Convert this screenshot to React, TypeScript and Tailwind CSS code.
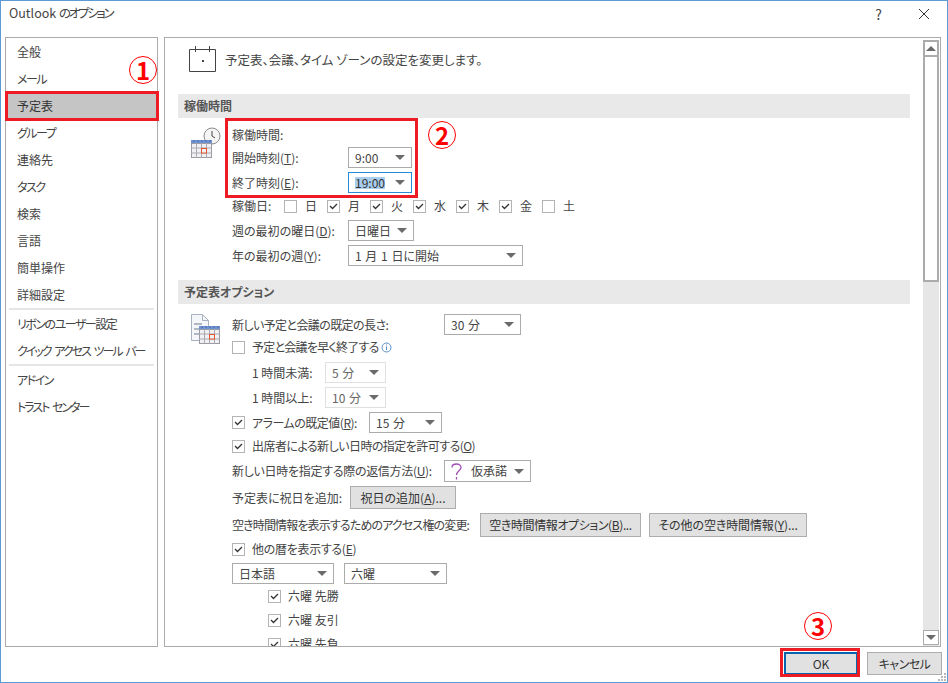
import type { ReactNode } from "react";

const FONT = "[font-family:'Noto_Sans_CJK_JP','Noto_Sans',sans-serif]";

function Arrow() {
  return <span className="h-0 w-0 flex-none border-x-[5px] border-t-[5px] border-x-transparent border-t-[#6b6b6b]" />;
}

function Combo({ value, width, active, muted, pre }: { value: string; width: string; active?: boolean; muted?: boolean; pre?: ReactNode }) {
  const border = active ? "border-[#2b8ad6]" : muted ? "border-[#e0e0e0]" : "border-[#ababab]";
  return (
    <div className={`flex h-full flex-none items-center justify-between border bg-white pl-[6px] pr-[6px] ${width} ${border}`}>
      <span className="flex items-center gap-[9px] whitespace-nowrap [word-spacing:1px]">
        {pre}
        <span className={active ? "bg-[#a9cdec] text-[#333]" : muted ? "text-[#666]" : ""}>{value}</span>
      </span>
      <Arrow />
    </div>
  );
}

function Check({ checked }: { checked?: boolean }) {
  return (
    <span className="flex h-[13px] w-[13px] flex-none items-center justify-center border border-[#b4b4b4] bg-white">
      {checked ? (
        <svg width="9" height="7" viewBox="0 0 9 7" fill="none" stroke="#333" strokeWidth="1.3">
          <path d="M1 3l2.5 2.5L8 1" />
        </svg>
      ) : null}
    </span>
  );
}

function Button({ children, width }: { children: ReactNode; width: string }) {
  return (
    <div className={`flex h-full flex-none items-center justify-center border border-[#adadad] bg-[#e1e1e1] whitespace-nowrap text-[#333] ${width}`}>
      {children}
    </div>
  );
}

function Row({ className, children }: { className: string; children: ReactNode }) {
  return <div className={`ml-[54px] flex items-center whitespace-nowrap ${className}`}>{children}</div>;
}

function Section({ title }: { title: string }) {
  return (
    <div className="flex h-[24px] w-[732px] flex-none items-center bg-[#e9e9e9] pl-[6px] font-bold text-[#555]">
      {title}
    </div>
  );
}

function Marker({ n, className }: { n: string; className: string }) {
  return (
    <div className={`absolute flex h-[28px] w-[28px] items-center justify-center rounded-full border border-[#ff0000] text-[24px] leading-none font-bold text-[#ff0000] ${className}`}>
      {n}
    </div>
  );
}

function Sidebar() {
  const first = ["全般", "メール", "予定表", "グループ", "連絡先", "タスク", "検索", "言語", "簡単操作", "詳細設定"];
  const second = ["リボンのユーザー設定", "クイック アクセス ツール バー"];
  const third = ["アドイン", "トラスト センター"];
  const kana = ["メール", "グループ", "タスク", "リボンのユーザー設定", "アドイン"];
  const spaced = ["クイック アクセス ツール バー", "トラスト センター"];
  const item = (label: string) => (
    <div
      key={label}
      className={`flex h-[27px] items-center pl-[11px] whitespace-nowrap ${label === "予定表" ? "bg-[#c5c5c5] text-[#333]" : ""} ${kana.includes(label) ? "tracking-[-1.5px]" : ""} ${spaced.includes(label) ? "tracking-[-2px] [word-spacing:3px]" : ""}`}
    >
      {label}
    </div>
  );
  return (
    <div className="h-full w-[153px] flex-none border border-[#ababab] bg-white">
      {first.map(item)}
      <div className="mx-[3px] h-[2px] bg-[#e6e6e6]" />
      {second.map(item)}
      <div className="mx-[3px] h-[2px] bg-[#e6e6e6]" />
      {third.map(item)}
    </div>
  );
}

function Scrollbar() {
  return (
    <div className="mt-[2px] mr-px flex w-[16px] flex-none flex-col bg-[#e6e6e6]">
      <div className="flex h-[15px] flex-none items-center justify-center border-2 border-b-0 border-[#ababab] bg-white">
        <span className="h-0 w-0 border-x-[5px] border-b-[5px] border-x-transparent border-b-[#6b6b6b]" />
      </div>
      <div className="h-[227px] flex-none border-2 border-[#ababab] bg-white" />
      <div className="flex-1" />
      <div className="mb-px flex h-[15px] flex-none items-center justify-center border border-[#ababab] bg-white">
        <span className="h-0 w-0 border-x-[5px] border-t-[5px] border-x-transparent border-t-[#6b6b6b]" />
      </div>
    </div>
  );
}

function CalendarGlyph() {
  return (
    <>
      <rect x="0.5" y="0.5" width="20" height="3" fill="#6f93d2" stroke="#6f93d2" />
      <path d="M3 0v2M7 0v2M11 0v2M15 0v2M19 0v2" stroke="#4a6aa8" />
      <rect x="0.5" y="3.5" width="20" height="14" fill="#f1f1f3" stroke="#9a9aa4" />
      <path d="M0 8h21M0 13h21M5.5 3v15M10.5 3v15M15.5 3v15" stroke="#a9a9b2" />
      <rect x="10.5" y="8.5" width="5" height="4.5" fill="#f1f1f3" stroke="#e0552d" />
    </>
  );
}

export default function App() {
  const days: [string, boolean][] = [["日", false], ["月", true], ["火", true], ["水", true], ["木", true], ["金", true], ["土", false]];

  return (
    <div className={`relative flex h-[683px] w-[948px] flex-col overflow-hidden border border-[#5b9bd5] bg-white text-[12px] leading-none text-[#444] [font-feature-settings:'palt'] ${FONT}`}>
      <div className="flex h-[36px] flex-none items-start justify-between pl-[8px]">
        <span className="mt-[6px] text-[12.5px] whitespace-nowrap">
          Outlook <span className="tracking-[-2.3px]">のオプション</span>
        </span>
        <div className="mt-[6px] flex items-center">
          <span className="mr-[36px] text-[14px] text-[#444]">?</span>
          <svg className="mr-[17px]" width="12" height="12" viewBox="0 0 12 12" stroke="#333" strokeWidth="1">
            <path d="M1 1l10 10M11 1L1 11" />
          </svg>
        </div>
      </div>

      <div className="flex h-[610px] flex-none gap-[6px] pl-[4px]">
        <Sidebar />
        <div className="flex h-full w-[777px] flex-none border border-[#ababab]">
          <div className="flex min-w-0 flex-1 flex-col overflow-hidden pl-[13px]">
            <div className="flex h-[56px] flex-none items-start pl-[10px] pt-[6px]">
              <svg width="29" height="28" viewBox="0 0 29 28" fill="none" stroke="#444" className="flex-none">
                <path d="M1.5 5.5h26v22h-26zM7.5 2v6M21.5 2v6" />
                <rect x="14" y="16" width="2" height="2" fill="#444" stroke="none" />
              </svg>
              <span className="mt-[10px] ml-[8px] text-[12.5px] whitespace-nowrap">予定表、会議、タイム ゾーンの設定を変更します。</span>
            </div>

            <Section title="稼働時間" />
            <div className="relative h-[162px] flex-none">
              <svg className="absolute top-[8px] left-[12px]" width="33" height="34" viewBox="0 0 33 34" fill="none">
                <circle cx="22" cy="10" r="8" fill="#f5f5f5" stroke="#8a8a8a" />
                <path d="M22 5v5l3 2" stroke="#444" />
                <g transform="translate(1 14)">
                  <CalendarGlyph />
                </g>
              </svg>
              <Row className="mt-[6px] h-[22px]">稼働時間:</Row>
              <Row className="mt-px h-[21px]">
                <span className="w-[116px] flex-none">開始時刻(<u>T</u>):</span>
                <Combo value="9:00" width="w-[64px]" />
              </Row>
              <Row className="mt-[4px] h-[21px]">
                <span className="w-[116px] flex-none">終了時刻(<u>E</u>):</span>
                <Combo value="19:00" width="w-[64px]" active />
              </Row>
              <Row className="mt-[3px] h-[20px]">
                <span className="w-[52px] flex-none">稼働日:</span>
                {days.map(([d, on]) => (
                  <span key={d} className="flex w-[43px] flex-none items-center gap-[8px]">
                    <Check checked={on} />
                    {d}
                  </span>
                ))}
              </Row>
              <Row className="mt-[4px] h-[21px]">
                <span className="w-[116px] flex-none">週の最初の曜日(<u>D</u>):</span>
                <Combo value="日曜日" width="w-[66px]" />
              </Row>
              <Row className="mt-[4px] h-[21px]">
                <span className="w-[116px] flex-none">年の最初の週(<u>Y</u>):</span>
                <Combo value="1 月 1 日に開始" width="w-[175px]" />
              </Row>
            </div>

            <Section title="予定表オプション" />
            <div className="relative flex-1">
              <svg className="absolute top-[9px] left-[12px]" width="32" height="34" viewBox="0 0 32 34" fill="none">
                <path d="M1.5 1.5h11l6 6v20h-17z" fill="#f4f6fa" stroke="#a9b2c2" />
                <path d="M12.5 1.5v6h6" stroke="#a9b2c2" />
                <path d="M4 11h8M4 16h5M4 21h5" stroke="#6c7a92" />
                <g transform="translate(9 13)">
                  <CalendarGlyph />
                </g>
              </svg>
              <Row className="mt-[10px] h-[21px]">
                <span className="w-[212px] flex-none tracking-[-0.6px]">新しい予定と会議の既定の長さ:</span>
                <Combo value="30 分" width="w-[77px]" />
              </Row>
              <Row className="mt-[2px] h-[20px]">
                <Check />
                <span className="ml-[7px] tracking-[-0.75px]">予定と会議を早く終了する</span>
                <svg className="ml-[2px]" width="11" height="11" viewBox="0 0 11 11" fill="none" stroke="#5b8fc9">
                  <circle cx="5.5" cy="5.5" r="4.5" />
                  <path d="M5.5 4.5v3.5M5.5 2.5v1" />
                </svg>
              </Row>
              <Row className="mt-[5px] h-[21px] pl-[20px]">
                <span className="w-[73px] flex-none">1 時間未満:</span>
                <Combo value="5 分" width="w-[61px]" muted />
              </Row>
              <Row className="mt-[4px] h-[21px] pl-[20px]">
                <span className="w-[73px] flex-none">1 時間以上:</span>
                <Combo value="10 分" width="w-[61px]" muted />
              </Row>
              <Row className="mt-[4px] h-[21px]">
                <Check checked />
                <span className="ml-[7px] w-[117px] flex-none tracking-[-0.5px]">アラームの既定値(<u>R</u>):</span>
                <Combo value="15 分" width="w-[73px]" />
              </Row>
              <Row className="mt-[3px] h-[20px]">
                <Check checked />
                <span className="ml-[7px] tracking-[-0.55px]">出席者による新しい日時の指定を許可する(<u>O</u>)</span>
              </Row>
              <Row className="mt-[4px] h-[22px]">
                <span className="w-[212px] flex-none tracking-[-0.3px]">新しい日時を指定する際の返信方法(<u>U</u>):</span>
                <Combo
                  value="仮承諾"
                  width="w-[87px]"
                  pre={
                    <svg width="11" height="17" viewBox="0 0 11 17" fill="none" stroke="#a24fb5" strokeWidth="1.3" className="flex-none">
                      <path d="M1 4.5C1 2.3 3 1 5.5 1S10 2.5 10 4.5c0 3-4.5 3.5-4.5 7.5" />
                      <path d="M5.5 14v2.5" />
                    </svg>
                  }
                />
              </Row>
              <Row className="mt-[4px] h-[23px]">
                <span className="w-[118px] flex-none">予定表に祝日を追加:</span>
                <Button width="w-[106px]">祝日の追加(<u>A</u>)...</Button>
              </Row>
              <Row className="mt-[4px] h-[24px]">
                <span className="w-[248px] flex-none tracking-[-0.85px]">空き時間情報を表示するためのアクセス権の変更:</span>
                <Button width="w-[161px] tracking-[-0.4px]">空き時間情報オプション(<u>B</u>)...</Button>
                <span className="w-[8px] flex-none" />
                <Button width="w-[158px] tracking-[-0.1px]">その他の空き時間情報(<u>Y</u>)...</Button>
              </Row>
              <Row className="mt-[2px] h-[20px]">
                <Check checked />
                <span className="ml-[7px] tracking-[-0.3px]">他の暦を表示する(<u>E</u>)</span>
              </Row>
              <Row className="mt-[4px] h-[21px] gap-[10px]">
                <Combo value="日本語" width="w-[102px]" />
                <Combo value="六曜" width="w-[103px]" />
              </Row>
              {["六曜 先勝", "六曜 友引", "六曜 先負"].map((label, i) => (
                <Row key={label} className={`h-[20px] pl-[36px] ${i === 0 ? "mt-[2px]" : "mt-[4px]"}`}>
                  <Check checked />
                  <span className="ml-[7px]">{label}</span>
                </Row>
              ))}
            </div>
          </div>
          <Scrollbar />
        </div>
      </div>

      <div className="mt-[5px] flex h-[23px] flex-none justify-end pr-[5px]">
        <div className="mr-[9px] flex h-[23px] w-[74px] items-center justify-center border-2 border-[#0a64ad] bg-[#e1e1e1] text-[#333]">OK</div>
        <Button width="w-[75px] tracking-[-0.5px]">キャンセル</Button>
      </div>

      <div className="absolute right-[1px] bottom-[1px] grid grid-cols-3 gap-px">
        <span /><span /><span className="h-[2px] w-[2px] bg-[#b8b8b8]" />
        <span /><span className="h-[2px] w-[2px] bg-[#b8b8b8]" /><span className="h-[2px] w-[2px] bg-[#b8b8b8]" />
        <span className="h-[2px] w-[2px] bg-[#b8b8b8]" /><span className="h-[2px] w-[2px] bg-[#b8b8b8]" /><span className="h-[2px] w-[2px] bg-[#b8b8b8]" />
      </div>

      <div className="absolute top-[90px] left-[4px] h-[30px] w-[154px] border-[3px] border-[#ed1c24]" />
      <div className="absolute top-[117px] left-[224px] h-[80px] w-[193px] border-[3px] border-[#ed1c24]" />
      <div className="absolute top-[647px] left-[779px] h-[29px] w-[80px] border-[3px] border-[#ed1c24]" />
      <Marker n="1" className="top-[55px] left-[128px]" />
      <Marker n="2" className="top-[120px] left-[427px]" />
      <Marker n="3" className="top-[611px] left-[803px]" />
    </div>
  );
}
